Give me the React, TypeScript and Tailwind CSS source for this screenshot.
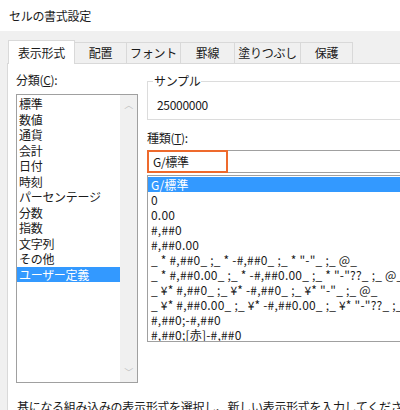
const cats = ["標準", "数値", "通貨", "会計", "日付", "時刻", "パーセンテージ", "分数", "指数", "文字列", "その他", "ユーザー定義"];
const types = [
  "G/標準",
  "0",
  "0.00",
  "#,##0",
  "#,##0.00",
  '_ * #,##0_ ;_ * -#,##0_ ;_ * "-"_ ;_ @_ ',
  '_ * #,##0.00_ ;_ * -#,##0.00_ ;_ * "-"??_ ;_ @_ ',
  '_ ¥* #,##0_ ;_ ¥* -#,##0_ ;_ ¥* "-"_ ;_ @_ ',
  '_ ¥* #,##0.00_ ;_ ¥* -#,##0.00_ ;_ ¥* "-"??_ ;_ @_ ',
  "#,##0;-#,##0",
  "#,##0;[赤]-#,##0",
];
const tabs = [
  { t: "表示形式", w: "w-[67px]" },
  { t: "配置", w: "w-[52px]" },
  { t: "フォント", w: "w-[54px]" },
  { t: "罫線", w: "w-[54px]" },
  { t: "塗りつぶし", w: "w-[66px]" },
  { t: "保護", w: "w-[52px]" },
];

export default function App() {
  return (
    <div className="w-[400px] h-[410px] overflow-hidden bg-[#f0f0f0] text-[12px] text-[#1a1a1a] tracking-[-0.3px]" style={{ fontFamily: '"Noto Sans CJK JP", sans-serif' }}>
      <div className="h-[31px] bg-white flex items-center pl-[9px]">セルの書式設定</div>
      <div className="flex pl-[8px] h-[32px] items-end">
        {tabs.map((x, i) =>
          i === 0 ? (
            <div key={x.t} className={x.w + " shrink-0 whitespace-nowrap h-[24px] bg-white border border-b-0 border-[#d9d9d9] flex items-center justify-center relative -mb-px z-10"}>{x.t}</div>
          ) : (
            <div key={x.t} className={x.w + " shrink-0 whitespace-nowrap h-[21px] bg-[#f0f0f0] border border-l-0 border-b-0 border-[#d9d9d9] flex items-center justify-center"}>{x.t}</div>
          )
        )}
      </div>
      <div className="ml-[7px] bg-white border-l border-t border-[#d9d9d9] h-[347px] relative">
        <div className="flex gap-[9px] pl-[8px] pt-[7px]">
          <div className="w-[122px] shrink-0">
            <div className="h-[23px] leading-[16px] pt-[1px]">分類(<span className="underline">C</span>):</div>
            <div className="border border-[#a0a0a0] h-[289px] flex">
              <div className="flex-1 pt-[1px] min-w-0">
                {cats.map((c, i) => (
                  <div key={c} className={"h-[15.5px] leading-[15.5px] pl-[2px] whitespace-nowrap " + (i === cats.length - 1 ? "bg-[#3399ff] text-white" : "")}>{c}</div>
                ))}
              </div>
              <div className="w-[17px] shrink-0 bg-[#f0f0f0] flex flex-col justify-between items-center text-[#c0c0c0] text-[9px] py-[3px]">
                <span>︿</span>
                <span>﹀</span>
              </div>
            </div>
          </div>
          <div className="flex-1 min-w-0 pt-[3px]">
            <div className="border border-[#dcdcdc] border-r-0 h-[39px] relative pl-[9px] pt-[14px] mt-[7px]">
              <span className="absolute -top-[10px] left-[5px] bg-white px-[1px]">サンプル</span>
              25000000
            </div>
            <div className="mt-[9px] h-[17px] leading-[17px]">種類(<span className="underline">T</span>):</div>
            <div className="mt-[4px] h-[23px] border border-[#a0a0a0] border-r-0 relative">
              <div className="absolute -left-px -top-px w-[81px] h-[23px] border-2 border-[#ee6a2d] pl-[4px] leading-[19px]">G/標準</div>
            </div>
            <div className="mt-[2px] h-[167px] border border-[#a0a0a0] border-r-0 pt-[1px] overflow-hidden">
              {types.map((t, i) => (
                <div key={i} className={"h-[15px] leading-[15px] pl-[3px] whitespace-pre tracking-[0.2px] " + (i === 0 ? "bg-[#3399ff] text-white" : "")}>{t}</div>
              ))}
            </div>
          </div>
        </div>
        <div className="absolute left-[9px] top-[334px] whitespace-nowrap">基になる組み込みの表示形式を選択し、新しい表示形式を入力してください。</div>
      </div>
    </div>
  );
}
